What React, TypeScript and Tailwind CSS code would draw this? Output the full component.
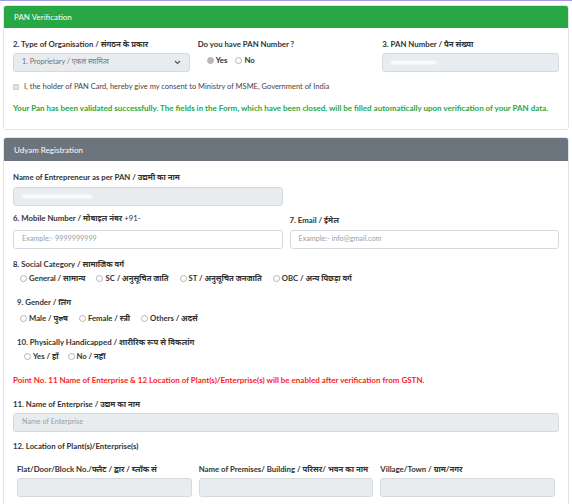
import React from "react";

const font = { fontFamily: '"Lato", "Noto Sans", sans-serif' };

function Radio({ checked = false }: { checked?: boolean }) {
  return (
    <span
      className={`inline-block h-[7px] w-[7px] shrink-0 rounded-full border border-[#b5b5b5] ${
        checked ? "bg-[#b8b8b8]" : "bg-white"
      }`}
    />
  );
}

function Option({ label, className = "" }: { label: string; className?: string }) {
  return (
    <span className={`flex items-center gap-[2px] font-bold text-[#333] ${className}`}>
      <Radio />
      {label}
    </span>
  );
}

function Field({ children, className = "" }: { children?: React.ReactNode; className?: string }) {
  return (
    <div
      className={`flex h-[19px] items-center rounded-[3px] border border-[#d6dade] bg-[#e9ecef] px-[8px] text-[7.2px] text-[#8a8f94] ${className}`}
    >
      {children}
    </div>
  );
}

function Label({ children, className = "" }: { children: React.ReactNode; className?: string }) {
  return <div className={`text-[7.8px] font-bold leading-[10px] text-[#333] ${className}`}>{children}</div>;
}

export default function App() {
  return (
    <div className="min-h-screen w-[572px] border-t border-[#a59be6] bg-white pl-[3px] pt-[4px]" style={font}>
      {/* PAN verification */}
      <div className="w-[566px] overflow-hidden rounded-[3px] border border-[#e1e4e7]">
        <div className="flex h-[22px] items-center bg-[#28a745] px-[10px] text-[8px] text-white">PAN Verification</div>
        <div className="px-[9px] pt-[11px] pb-[15px]">
          <div className="grid grid-cols-3 gap-x-[8px]">
            <div>
              <Label>2. Type of Organisation / संगठन के प्रकार</Label>
              <Field className="mt-[4px] justify-between">
                <span className="text-[#6c7379]">1. Proprietary / एकल स्वामित्व</span>
                <svg width="7" height="5" viewBox="0 0 7 5" fill="none" stroke="#555" strokeWidth="1.2">
                  <path d="M1 1l2.5 2.5L6 1" />
                </svg>
              </Field>
            </div>
            <div>
              <Label>Do you have PAN Number ?</Label>
              <div className="mt-[6px] flex items-center gap-[8px] pl-[9px] text-[7.8px]">
                <span className="flex items-center gap-[2px] font-bold text-[#333]">
                  <Radio checked />
                  Yes
                </span>
                <span className="flex items-center gap-[2px] font-bold text-[#333]">
                  <Radio />
                  No
                </span>
              </div>
            </div>
            <div>
              <Label>3. PAN Number / पैन संख्या</Label>
              <Field className="mt-[4px]">
                <span className="h-[3px] w-[46px] rounded-full bg-white blur-[1px]" />
              </Field>
            </div>
          </div>
          <div className="mt-[9px] flex items-center gap-[5px] text-[7.5px] text-[#444]">
            <span className="inline-block h-[6px] w-[6px] rounded-[1px] border border-[#c8c8c8] bg-[#e2e2e2]" />
            I, the holder of PAN Card, hereby give my consent to Ministry of MSME, Government of India
          </div>
          <div className="mt-[10px] text-[8px] font-bold text-[#28a745]">
            Your Pan has been validated successfully. The fields in the Form, which have been closed, will be filled
            automatically upon verification of your PAN data.
          </div>
        </div>
      </div>

      {/* Udyam registration */}
      <div className="mt-[7px] w-[566px] overflow-hidden rounded-t-[3px] border border-[#e1e4e7]">
        <div className="flex h-[23px] items-center bg-[#6c757d] px-[10px] text-[8px] text-white">Udyam Registration</div>
        <div className="px-[9px] pt-[11px]">
          <Label>Name of Entrepreneur as per PAN / उद्यमी का नाम</Label>
          <div className="w-[270px]">
            <Field className="mt-[5px]">
              <span className="h-[3px] w-[70px] rounded-full bg-white blur-[1px]" />
            </Field>
          </div>

          <div className="mt-[7px] grid grid-cols-2 gap-x-[7px]">
            <div>
              <Label>
                6. Mobile Number / मोबाइल नंबर <span className="font-normal">+91-</span>
              </Label>
              <Field className="mt-[7px] bg-white text-[#9aa0a6]">Example:- 9999999999</Field>
            </div>
            <div className="pt-[2px]">
              <Label>7. Email / ईमेल</Label>
              <Field className="mt-[5px] bg-white text-[#9aa0a6]">Example:- info@gmail.com</Field>
            </div>
          </div>

          <Label className="mt-[10px]">8. Social Category / सामाजिक वर्ग</Label>
          <div className="mt-[4px] flex items-center gap-[11px] pl-[7px] text-[7.7px] leading-[10px]">
            <Option label="General / सामान्य" />
            <Option label="SC / अनुसूचित जाति" />
            <Option label="ST / अनुसूचित जनजाति" />
            <Option label="OBC / अन्य पिछड़ा वर्ग" />
          </div>

          <Label className="mt-[14px] pl-[4px]">9. Gender / लिंग</Label>
          <div className="mt-[6px] flex items-center gap-[11px] pl-[7px] text-[7.7px] leading-[10px]">
            <Option label="Male / पुरुष" />
            <Option label="Female / स्त्री" />
            <Option label="Others / अदर्स" />
          </div>

          <Label className="mt-[14px] pl-[4px]">10. Physically Handicapped / शारीरिक रूप से विकलांग</Label>
          <div className="mt-[4px] flex items-center gap-[9px] pl-[11px] text-[7.7px] leading-[10px]">
            <Option label="Yes / हाँ" />
            <Option label="No / नहीं" />
          </div>

          <div className="mt-[14px] text-[8px] font-bold leading-[10px] text-[#ff1a1a]">
            Point No. 11 Name of Enterprise &amp; 12 Location of Plant(s)/Enterprise(s) will be enabled after
            verification from GSTN.
          </div>

          <Label className="mt-[14px]">11. Name of Enterprise / उद्यम का नाम</Label>
          <Field className="mt-[4px] text-[#9aa0a6]">Name of Enterprise</Field>

          <Label className="mt-[9px]">12. Location of Plant(s)/Enterprise(s)</Label>

          <div className="mt-[13px] grid grid-cols-3 gap-x-[7px] px-[4px] pb-[8px]">
            <div>
              <Label>Flat/Door/Block No./फ्लैट / द्वार / ब्लॉक सं</Label>
              <Field className="mt-[4px]" />
            </div>
            <div>
              <Label>Name of Premises/ Building / परिसर/ भवन का नाम</Label>
              <Field className="mt-[4px]" />
            </div>
            <div>
              <Label>Village/Town / ग्राम/नगर</Label>
              <Field className="mt-[4px]" />
            </div>
          </div>
        </div>
      </div>
    </div>
  );
}
